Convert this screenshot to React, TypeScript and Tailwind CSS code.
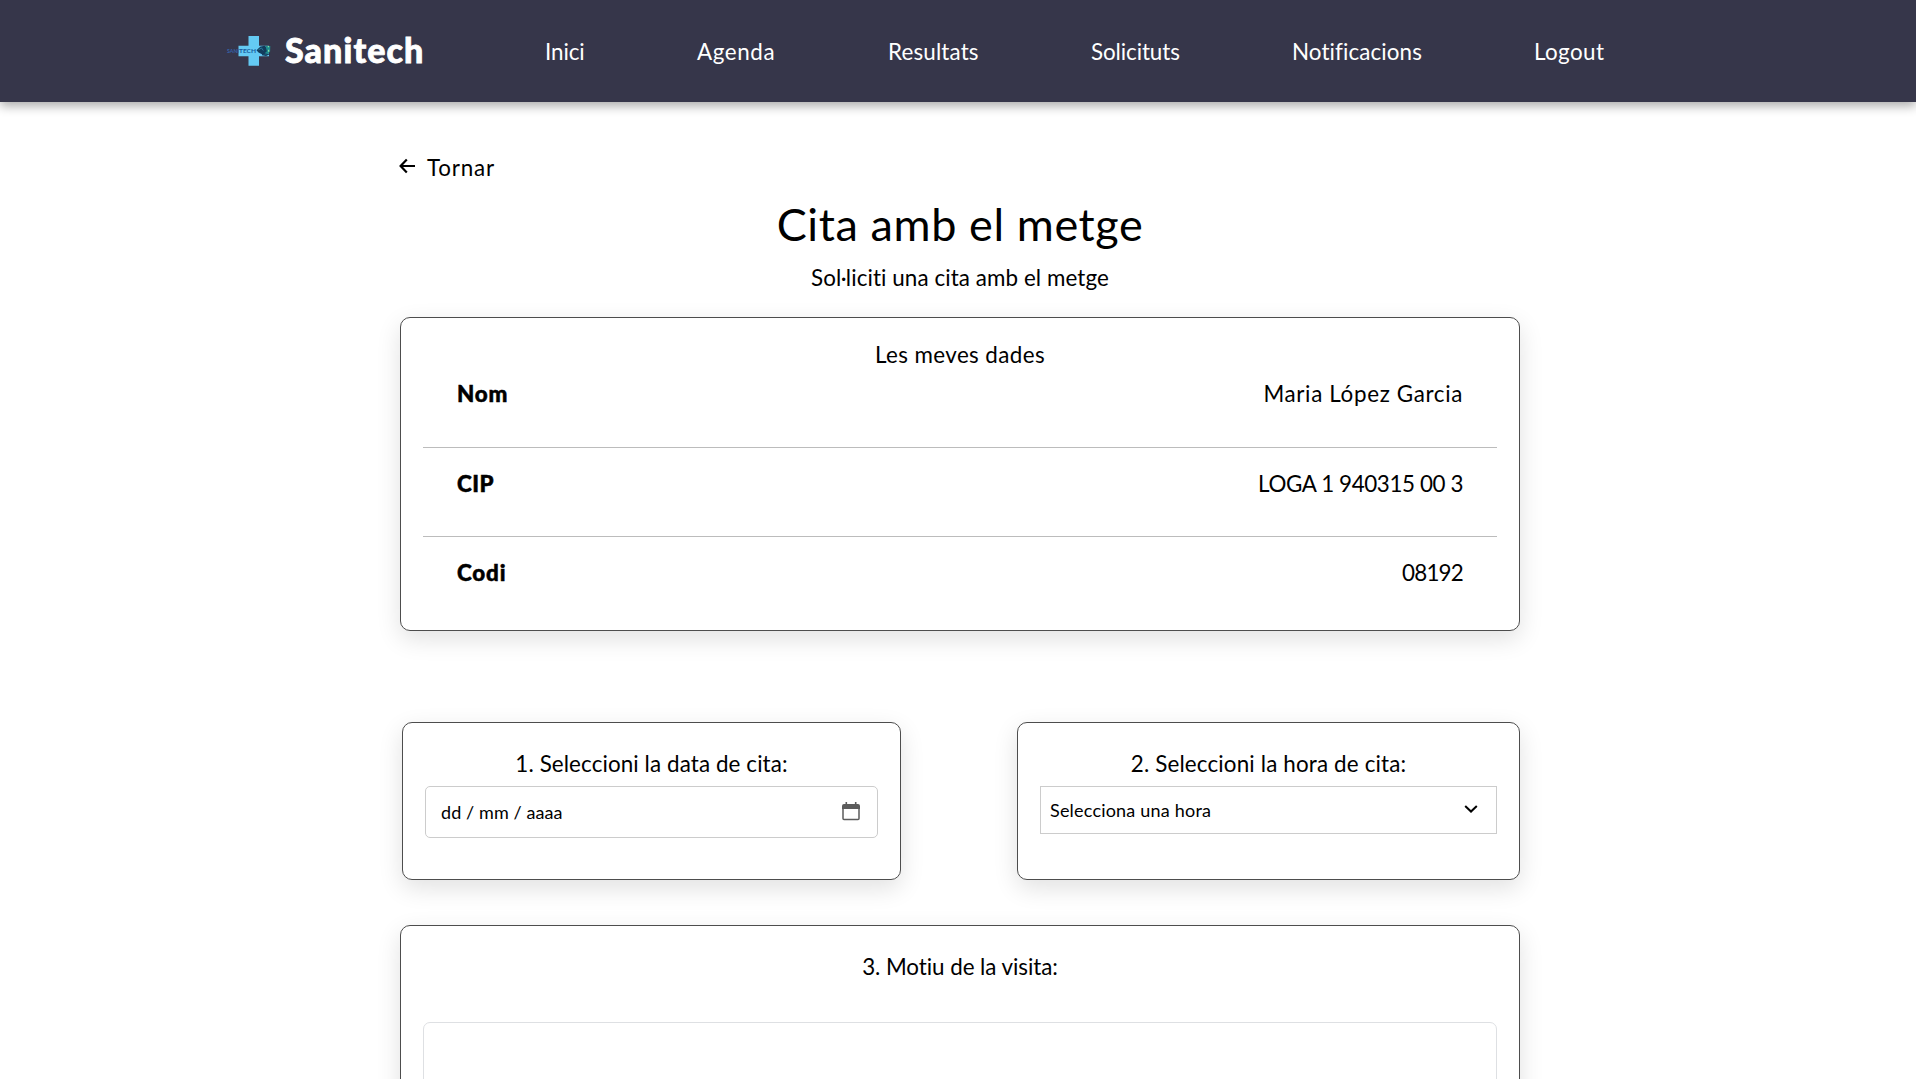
import type { ReactNode } from 'react';

const navItems = [
  { label: 'Inici', className: 'w-[40px] tracking-[-0.1px]' },
  { label: 'Agenda', className: 'w-[79px] tracking-[0.6px]' },
  { label: 'Resultats', className: 'w-[91px] tracking-[0.15px]' },
  { label: 'Solicituts', className: 'w-[89px] tracking-[-0.1px]' },
  { label: 'Notificacions', className: 'w-[130px] tracking-[0.1px]' },
  { label: 'Logout', className: 'w-[72px] tracking-[0.4px]' },
];

function Logo() {
  return (
    <svg width="48" height="32" viewBox="0 0 48 32" className="shrink-0" aria-hidden="true">
      <path d="M22.5 1h10.500v9.700h10v10.600H33v9.400H22.500v-9.400h-10V10.700h10z" fill="#64caf3" />
      <text x="1" y="17.600" fontSize="6" fontWeight="700" fontFamily="Lato, sans-serif" fill="#3561a8" textLength="12" lengthAdjust="spacingAndGlyphs">SANI</text>
      <text x="13" y="17.600" fontSize="6" fontWeight="700" fontFamily="Lato, sans-serif" fill="#175a9c" textLength="17" lengthAdjust="spacingAndGlyphs">TECH</text>
      <path d="M30.500 15.300l4-3.800 4.500-.8 3.500 4.300-1.500 4.700-4 .1-4.500-2.200z" fill="#123c5c" />
      <path d="M32.500 14.800l3-1.800 1.800 2.500" fill="none" stroke="#2c81a4" strokeWidth=".9" />
      <path d="M39.500 11h4.800l-.2 5.500-2.400 2.500-3-.8 2.200-2z" fill="#1f8b8e" />
      <path d="M41.800 11.700h1.200M42.600 14.800v2" stroke="#8be0a0" strokeWidth="1.200" />
      <path d="M36 19.600l4 .8 3.500-1.700" fill="none" stroke="#123c5c" strokeWidth="1.200" />
    </svg>
  );
}

function Card({ className, children }: { className: string; children: ReactNode }) {
  return (
    <section className={`rounded-[10px] border border-[#4d4d4d] bg-white px-[22px] shadow-[0_8px_24px_rgba(0,0,0,0.12)] ${className}`}>
      {children}
    </section>
  );
}

function Row({ label, value, className, labelClass, valueClass }: { label: string; value: string; className: string; labelClass: string; valueClass: string }) {
  return (
    <div className={`flex items-start justify-between px-[34px] ${className}`}>
      <dt className={`font-black [-webkit-text-stroke:0.5px_black] ${labelClass}`}>{label}</dt>
      <dd className={valueClass}>{value}</dd>
    </div>
  );
}

export default function App() {
  return (
    <div className="h-[1079px] overflow-hidden bg-white font-['Lato',sans-serif] text-[22.4px] leading-7 text-black">
      <header className="flex h-[102px] items-center bg-[#36364a] pl-[226px] text-white shadow-[0_4px_10px_rgba(0,0,0,0.33)]">
        <a href="#" className="flex w-[319px] items-center gap-[11px]">
          <Logo />
          <span className="pb-[2px] text-[34px] leading-10 font-black tracking-[1.1px] [-webkit-text-stroke:0.8px_white]">Sanitech</span>
        </a>
        <nav className="flex gap-[112px] pt-[2px]">
          {navItems.map((item) => (
            <a key={item.label} href="#" className={`whitespace-nowrap ${item.className}`}>
              {item.label}
            </a>
          ))}
        </nav>
      </header>

      <main className="ml-[400px] w-[1120px] pt-[52px]">
        <a href="#" className="flex items-center gap-[11px]">
          <svg width="17" height="16" viewBox="0 0 17 16" className="-mt-1 -ml-px shrink-0" fill="none" stroke="black" strokeWidth="2.200" aria-hidden="true">
            <path d="M7.800 1.500L1.600 8l6.200 6.500M1.800 8h14.200" />
          </svg>
          <span className="tracking-[0.8px]">Tornar</span>
        </a>

        <h1 className="mt-[14px] text-center text-[45px] leading-14 tracking-[0.6px]">Cita amb el metge</h1>
        <p className="mt-3 text-center tracking-[0.08px]">Sol·liciti una cita amb el metge</p>

        <Card className="mt-[25px] h-[314px] pt-[23px]">
          <h2 className="text-center tracking-[0.4px]">Les meves dades</h2>
          <dl className="mt-[11px]">
            <Row label="Nom" value="Maria López Garcia" className="h-[68px] border-b border-[#bcbcbc]" labelClass="tracking-[0.8px]" valueClass="tracking-[0.65px]" />
            <Row label="CIP" value="LOGA 1 940315 00 3" className="h-[89px] border-b border-[#bcbcbc] pt-[22px]" labelClass="tracking-[0.5px]" valueClass="tracking-[-0.4px]" />
            <Row label="Codi" value="08192" className="pt-[22px]" labelClass="tracking-[0.8px]" valueClass="tracking-[-0.8px]" />
          </dl>
        </Card>

        <div className="mt-[91px] flex justify-between pl-[2px]">
          <Card className="h-[158px] w-[499px] pt-[27px]">
            <h2 className="text-center tracking-[0.1px]">1. Seleccioni la data de cita:</h2>
            <div className="mt-[8px] flex h-[52px] items-center justify-between rounded-[5px] border border-[#ccc] pr-[17px] pl-[15px]">
              <span className="text-[18px] tracking-[0.1px]">dd / mm / aaaa</span>
              <svg width="18" height="19" viewBox="0 0 18 19" className="-mt-[2px]" aria-hidden="true">
                <path d="M1 4v12.500a1 1 0 0 0 1 1h14a1 1 0 0 0 1-1V4" fill="none" stroke="#5c5c5c" strokeWidth="1.500" />
                <path d="M2 2h1.500V0h1.600v2h7.800V0h1.600v2H16a2 2 0 0 1 2 2v3H0V4a2 2 0 0 1 2-2z" fill="#5c5c5c" />
              </svg>
            </div>
          </Card>

          <Card className="h-[158px] w-[503px] pt-[27px]">
            <h2 className="text-center tracking-[0.15px]">2. Seleccioni la hora de cita:</h2>
            <div className="mt-[8px] flex h-[48px] items-center justify-between border border-[#ccc] pr-[18px] pl-[9px]">
              <span className="text-[18px] tracking-[0.2px]">Selecciona una hora</span>
              <svg width="14" height="8" viewBox="0 0 14 8" className="-mt-[3px]" fill="none" stroke="black" strokeWidth="2" aria-hidden="true">
                <path d="M1.200 1L7 6.500 12.800 1" />
              </svg>
            </div>
          </Card>
        </div>

        <Card className="mt-[45px] h-[400px] pt-[27px]">
          <h2 className="text-center tracking-[-0.06px]">3. Motiu de la visita:</h2>
          <div className="mt-[41px] h-[200px] rounded-[7px] border border-[#dee0e3]" />
        </Card>
      </main>
    </div>
  );
}
